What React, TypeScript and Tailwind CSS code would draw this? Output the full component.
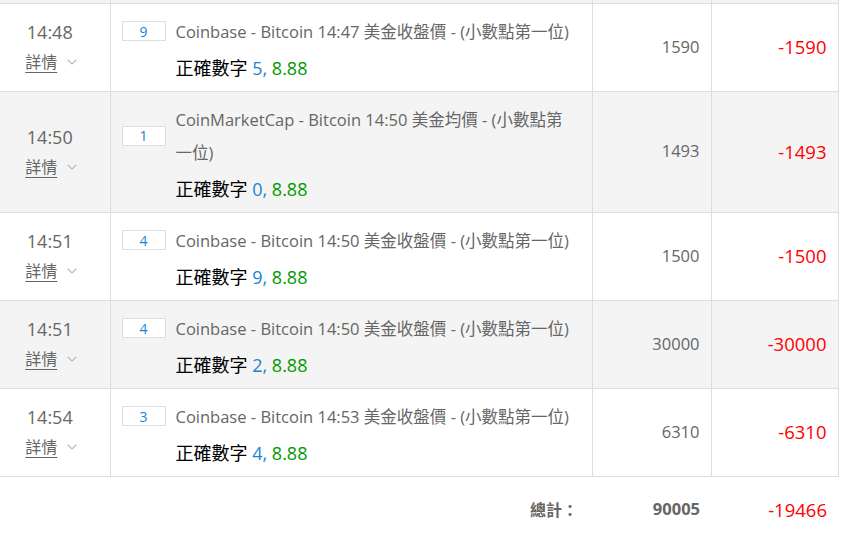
import { ChevronDown } from "lucide-react";

type Row = {
  time: string;
  idx: number;
  title: string;
  digit: number;
  odds: string;
  amount: number;
  result: number;
};

const rows: Row[] = [
  { time: "14:48", idx: 9, title: "Coinbase - Bitcoin 14:47 美金收盤價 - (小數點第一位)", digit: 5, odds: "8.88", amount: 1590, result: -1590 },
  { time: "14:50", idx: 1, title: "CoinMarketCap - Bitcoin 14:50 美金均價 - (小數點第一位)", digit: 0, odds: "8.88", amount: 1493, result: -1493 },
  { time: "14:51", idx: 4, title: "Coinbase - Bitcoin 14:50 美金收盤價 - (小數點第一位)", digit: 9, odds: "8.88", amount: 1500, result: -1500 },
  { time: "14:51", idx: 4, title: "Coinbase - Bitcoin 14:50 美金收盤價 - (小數點第一位)", digit: 2, odds: "8.88", amount: 30000, result: -30000 },
  { time: "14:54", idx: 3, title: "Coinbase - Bitcoin 14:53 美金收盤價 - (小數點第一位)", digit: 4, odds: "8.88", amount: 6310, result: -6310 },
];

export default function App() {
  return (
    <div
      className="h-[539px] w-[851px] overflow-hidden bg-white"
      style={{ fontFamily: '"Open Sans", "Noto Sans CJK TC", sans-serif' }}
    >
      <table className="w-[838px] table-fixed border-collapse">
        <colgroup>
          <col className="w-[110px]" />
          <col className="w-[482px]" />
          <col className="w-[119px]" />
          <col className="w-[127px]" />
        </colgroup>
        <tbody>
          {/* 上一列的尾巴 */}
          <tr className="h-[3px] bg-[#f4f4f4]">
            <td className="h-[3px] border-r border-[#dedede] p-0" />
            <td className="h-[3px] border-r border-[#dedede] p-0" />
            <td className="h-[3px] border-r border-[#dedede] p-0" />
            <td className="h-[3px] border-r border-[#dedede] p-0" />
          </tr>
          {rows.map((r, i) => (
            <tr
              key={i}
              className={`border-t border-[#dedede] ${i % 2 === 1 ? "bg-[#f4f4f4]" : "bg-white"}`}
            >
              <td className="border-r border-[#dedede] align-middle">
                <div className="flex flex-col items-center pr-[10px]">
                  <span className="text-[18px] leading-[30px] text-[#666]">{r.time}</span>
                  <span className="flex items-center gap-[7px] pl-[6px] text-[16px] leading-[30px] text-[#666]">
                    <span className="underline underline-offset-[4px]">詳情</span>
                    <ChevronDown size={16} strokeWidth={1.6} className="text-[#bbb]" />
                  </span>
                </div>
              </td>
              <td className="border-r border-[#dedede] pb-[5px] pl-[11px] pr-[14px] pt-[11px] align-top">
                <div className="flex items-center gap-[10px]">
                  <span className="flex h-[20px] w-[44px] shrink-0 items-center justify-center border border-[#dedede] bg-white text-[14px] text-[#1a83d6]">
                    {r.idx}
                  </span>
                  <span className="text-[16.5px] leading-[33px] text-[#666]">{r.title}</span>
                </div>
                <div className="mt-[2px] pl-[54px] text-[18px] leading-[36px] text-black">
                  正確數字 <span className="text-[#1a83d6]">{r.digit},</span>{" "}
                  <span className="text-[#009a00]">{r.odds}</span>
                </div>
              </td>
              <td className="border-r border-[#dedede] pr-[11px] text-right align-middle text-[16.5px] text-[#666]">
                {r.amount}
              </td>
              <td className="border-r border-[#dedede] pr-[11px] text-right align-middle text-[18.5px] text-[#ff0000]">
                {r.result}
              </td>
            </tr>
          ))}
          <tr className="h-[67px] border-t border-[#dedede]">
            <td />
            <td className="pr-[14px] text-right align-middle text-[16px] font-bold text-[#666]">總計：</td>
            <td className="pr-[11px] text-right align-middle text-[16.5px] font-bold text-[#666]">90005</td>
            <td className="pr-[11px] text-right align-middle text-[18.5px] text-[#ff0000]">-19466</td>
          </tr>
        </tbody>
      </table>
    </div>
  );
}
